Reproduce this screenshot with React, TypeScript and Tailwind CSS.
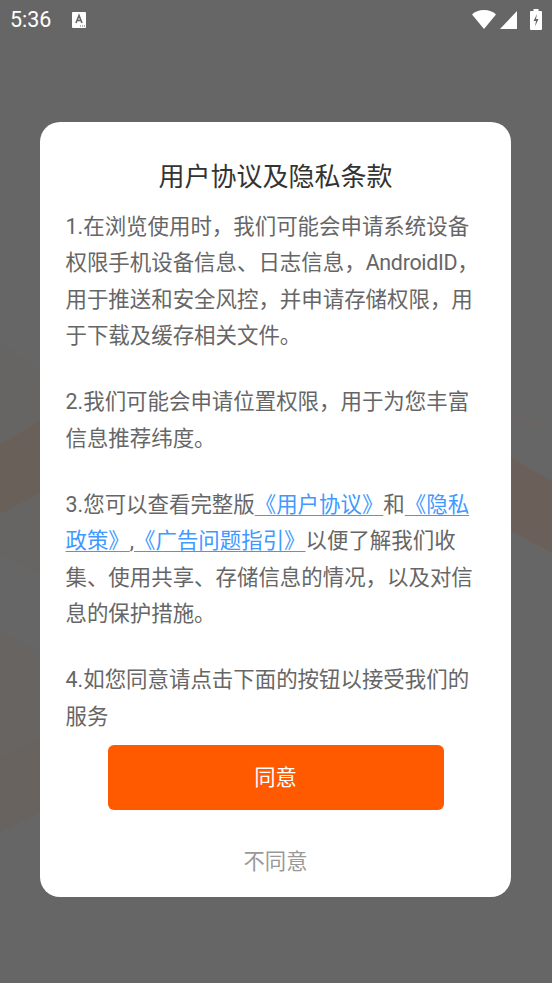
const FONT = "font-['Roboto','Noto_Sans_CJK_SC',sans-serif]";

function Link({ children }: { children: React.ReactNode }) {
  return <span className="text-[#4099ff] underline underline-offset-[3px] decoration-1">{children}</span>;
}

function StatusBar() {
  return (
    <div className="flex items-center h-[39px] pl-[10px] pr-[10px] text-white">
      <span className="text-[21.5px] leading-none">5:36</span>
      <svg className="ml-[21px]" width="14" height="16" viewBox="0 0 14 16">
        <rect width="14" height="16" rx="1" fill="#fff" />
        <path d="M4 11 L7 3.5 L10 11 M5.2 8.5 H8.8" stroke="#666" strokeWidth="1.6" fill="none" />
        <path d="M8 14 h1 M10 14 h1 M12 14 h1" stroke="#666" strokeWidth="1" />
      </svg>
      <div className="flex-1" />
      <svg width="24" height="19" viewBox="0 0 24 19">
        <path d="M0 4.5 C3 1.5 7 0 12 0 C17 0 21 1.5 24 4.5 L12 19 Z" fill="#fff" />
      </svg>
      <svg className="ml-[4px]" width="17" height="18" viewBox="0 0 17 18">
        <path d="M17 0 V18 H0 Z" fill="#fff" />
      </svg>
      <svg className="ml-[13px]" width="12" height="21" viewBox="0 0 12 21">
        <path d="M3.5 0 H8.5 V2 H11 A1 1 0 0 1 12 3 V20 A1 1 0 0 1 11 21 H1 A1 1 0 0 1 0 20 V3 A1 1 0 0 1 1 2 H3.5 Z" fill="#fff" />
        <path d="M7 5 L3.5 12 H6 L5 17.5 L8.5 10 H6 Z" fill="#666" />
      </svg>
    </div>
  );
}

export default function App() {
  return (
    <div className={`relative w-[552px] h-[983px] overflow-hidden bg-[#666666] ${FONT}`}>
      {/* faint picture behind the scrim */}
      <svg className="absolute inset-0" width="552" height="983" viewBox="0 0 552 983">
        <path d="M0 341 L40 372 V575 L0 554 Z" fill="#676563" />
        <path d="M0 445 L40 420 V493 L0 514 Z" fill="#6a605a" />
        <path d="M0 632 L40 653 V812 L0 832 Z" fill="#676461" />
        <path d="M0 759 L40 738 V812 L0 832 Z" fill="#68635e" />
        <path d="M511 458 L552 481 V553 L511 531 Z" fill="#6b6059" />
        <path d="M511 412 C522 420 536 424 552 424" stroke="#696562" strokeWidth="4" fill="none" />
      </svg>
      <div className="relative">
        <StatusBar />
        <div className="mx-[40px] mt-[83px] w-[471px] h-[775px] rounded-[20px] bg-white flex flex-col items-center">
          <h1 className="mt-[37px] text-[26px] leading-[36px] text-[#333333] font-normal">用户协议及隐私条款</h1>
          <div className="self-start ml-[25.5px] mt-[14px] w-[418px] text-[21.45px] leading-[36.4px] text-[#666666]">
            <p>1.在浏览使用时，我们可能会申请系统设备权限手机设备信息、日志信息，<span className="tracking-[-0.3px]">AndroidID</span>，用于推送和安全风控，并申请存储权限，用于下载及缓存相关文件。</p>
            <p className="mt-[29.7px]">2.我们可能会申请位置权限，用于为您丰富信息推荐纬度。</p>
            <p className="mt-[29.7px]">3.您可以查看完整版<Link>《用户协议》</Link>和<Link>《隐私政策》</Link>,<Link>《广告问题指引》</Link>以便了解我们收集、使用共享、存储信息的情况，以及对信息的保护措施。</p>
            <p className="mt-[29.7px]">4.如您同意请点击下面的按钮以接受我们的服务</p>
          </div>
          <button className="mt-[10px] w-[336px] h-[65px] pt-[1px] rounded-[6px] bg-[#ff5a00] text-white text-[21.33px]">同意</button>
          <button className="mt-[34px] text-[21.33px] leading-[36px] text-[#999999]">不同意</button>
        </div>
      </div>
    </div>
  );
}
